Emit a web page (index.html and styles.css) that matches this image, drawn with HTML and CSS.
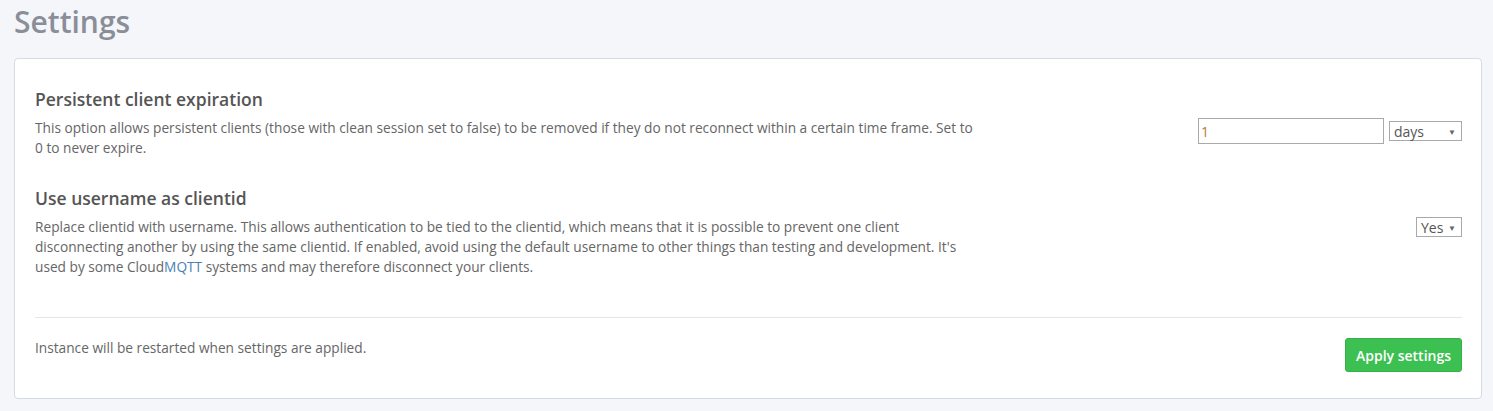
FILE: index.html
```html
<!DOCTYPE html>
<html>
<head>
<meta charset="utf-8">
<link rel="stylesheet" href="styles.css">
</head>
<body>
<h1 class="page-title">Settings</h1>
<div class="card">
  <div class="setting">
    <h3 class="setting-title">Persistent client expiration</h3>
    <div class="setting-row">
      <p class="setting-desc">This option allows persistent clients (those with clean session set to false) to be removed if they do not reconnect within a certain time frame. Set to 0 to never expire.</p>
      <div class="setting-control">
        <input class="text-input" type="text" value="1">
        <div class="select select-days"><span>days</span><span class="caret">▼</span></div>
      </div>
    </div>
  </div>
  <div class="setting">
    <h3 class="setting-title">Use username as clientid</h3>
    <div class="setting-row">
      <p class="setting-desc">Replace clientid with username. This allows authentication to be tied to the clientid, which means that it is possible to prevent one client disconnecting another by using the same clientid. If enabled, avoid using the default username to other things than testing and development. It's used by some Cloud<span class="link">MQTT</span> systems and may therefore disconnect your clients.</p>
      <div class="setting-control">
        <div class="select select-yes"><span>Yes</span><span class="caret">▼</span></div>
      </div>
    </div>
  </div>
  <hr class="divider">
  <div class="footer">
    <p class="footer-note">Instance will be restarted when settings are applied.</p>
    <button class="btn-apply">Apply settings</button>
  </div>
</div>
</body>
</html>
```
FILE: styles.css
```css
html, body {
  margin: 0;
  padding: 0;
  background: #f5f6fa;
  font-family: "Open Sans", "Noto Sans", sans-serif;
}
body {
  padding: 0 11px 0 14px;
}
.page-title {
  margin: 0;
  padding-top: 2px;
  height: 58px;
  box-sizing: border-box;
  font-size: 30px;
  font-weight: 600;
  color: #8a8e99;
  line-height: 40px;
}
.card {
  background: #fff;
  border: 1px solid #d3dbe9;
  border-radius: 4px;
  padding: 28px 19px 26px 20px;
}
.setting {
  margin-bottom: 28px;
}
.setting + .setting {
  margin-bottom: 40px;
}
.setting-title {
  margin: 0 0 7px 0;
  font-size: 17.5px;
  line-height: 24px;
  font-weight: 600;
  color: #555;
}
.setting-row {
  display: flex;
  justify-content: space-between;
  align-items: flex-start;
}
.setting-desc {
  margin: 0;
  width: 940px;
  font-size: 13.7px;
  line-height: 20px;
  color: #666;
}
.link {
  color: #4a7fb5;
}
.setting-control {
  display: flex;
  align-items: center;
  gap: 5px;
}
.text-input {
  width: 186px;
  height: 26px;
  box-sizing: border-box;
  border: 1px solid #a9a9a9;
  padding: 0 2px;
  font-family: inherit;
  font-size: 14px;
  color: #b07d3c;
  outline: none;
}
.select {
  display: flex;
  align-items: center;
  justify-content: space-between;
  height: 20px;
  box-sizing: border-box;
  border: 1px solid #a9a9a9;
  padding: 0 5px 0 4px;
  font-size: 14px;
  color: #555;
  background: #fff;
}
.select-days {
  width: 73px;
}
.select-yes {
  width: 46px;
}
.caret {
  font-size: 8px;
  color: #666;
}
.divider {
  border: 0;
  border-top: 1px solid #e6e6e6;
  margin: 0 0 20px 0;
}
.footer {
  display: flex;
  justify-content: space-between;
  align-items: flex-start;
}
.footer-note {
  margin: 0;
  font-size: 13.7px;
  line-height: 20px;
  color: #666;
}
.btn-apply {
  width: 117px;
  height: 34px;
  border: 1px solid #35b148;
  border-radius: 3px;
  background: #3cc051;
  color: #fff;
  font-family: inherit;
  font-size: 14px;
  font-weight: 600;
  padding: 0;
}
```
